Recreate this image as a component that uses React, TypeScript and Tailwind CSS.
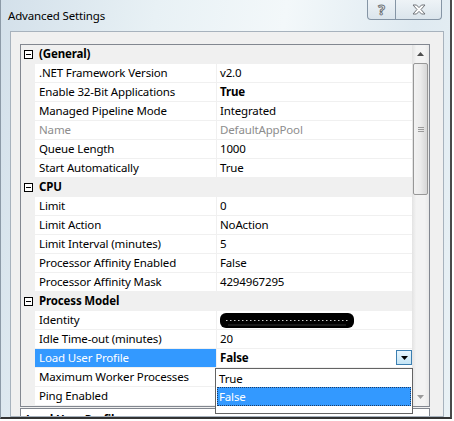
import { Fragment } from "react";

type Prop = { name: string; value?: string; bold?: boolean; muted?: boolean; kind?: "identity" | "selected" };
type Section = { title: string; props: Prop[] };

const sections: Section[] = [
  {
    title: "(General)",
    props: [
      { name: ".NET Framework Version", value: "v2.0" },
      { name: "Enable 32-Bit Applications", value: "True", bold: true },
      { name: "Managed Pipeline Mode", value: "Integrated" },
      { name: "Name", value: "DefaultAppPool", muted: true },
      { name: "Queue Length", value: "1000" },
      { name: "Start Automatically", value: "True" },
    ],
  },
  {
    title: "CPU",
    props: [
      { name: "Limit", value: "0" },
      { name: "Limit Action", value: "NoAction" },
      { name: "Limit Interval (minutes)", value: "5" },
      { name: "Processor Affinity Enabled", value: "False" },
      { name: "Processor Affinity Mask", value: "4294967295" },
    ],
  },
  {
    title: "Process Model",
    props: [
      { name: "Identity", kind: "identity" },
      { name: "Idle Time-out (minutes)", value: "20" },
      { name: "Load User Profile", value: "False", bold: true, kind: "selected" },
      { name: "Maximum Worker Processes" },
      { name: "Ping Enabled" },
    ],
  },
];

const Expander = () => (
  <div className="w-[9px] h-[9px] border border-black bg-white flex items-center justify-center">
    <div className="w-[5px] h-px bg-black" />
  </div>
);

const Redacted = () => (
  <svg width="134" height="15" viewBox="0 0 134 15">
    <rect x="0" y="0" width="134" height="15" rx="6" fill="#000" />
    <path d="M6 7.5 H128" stroke="#fff" strokeWidth="1.2" strokeDasharray="1.5 2.5" opacity="0.8" />
    <path d="M8 12 H126" stroke="#333" strokeWidth="1" />
  </svg>
);

const Row = ({ p }: { p: Prop }) => {
  const selected = p.kind === "selected";
  return (
    <div className="h-[19px] flex border-b border-[#f0f0f0]">
      <div className="w-[14px] bg-[#f0f0f0]" />
      <div
        className={`w-[181px] pl-[4px] flex items-center ${
          selected ? "bg-[#3399ff] text-white" : p.muted ? "text-[#8d8d8d]" : "text-black"
        }`}
      >
        {p.name}
      </div>
      <div className="flex-1 border-l border-[#f0f0f0] pl-[3px] flex items-center relative">
        {p.kind === "identity" ? (
          <Redacted />
        ) : (
          <span className={`${p.bold ? "font-bold" : ""} ${p.muted ? "text-[#8d8d8d]" : "text-black"}`}>
            {p.value}
          </span>
        )}
        {selected && (
          <div className="absolute right-0 top-[1px] w-[16px] h-[15px] border border-[#3c7fb1] bg-[linear-gradient(#eaf6fd,#c4e5f6)] flex items-center justify-center">
            <svg width="7" height="4" viewBox="0 0 7 4">
              <path d="M0 0 H7 L3.5 4 Z" fill="#000" />
            </svg>
          </div>
        )}
      </div>
    </div>
  );
};

const ScrollBar = () => (
  <div className="w-[17px] flex flex-col items-center bg-[linear-gradient(to_right,#e3e3e3,#f3f3f3_25%,#f3f3f3_75%,#e8e8e8)]">
    <div className="h-[18px] flex items-center justify-center">
      <svg width="7" height="4" viewBox="0 0 7 4">
        <path d="M0 4 H7 L3.5 0 Z" fill="#4d4d4d" />
      </svg>
    </div>
    <div className="w-[15px] h-[132px] rounded-[2px] border border-[#979797] bg-[linear-gradient(to_right,#f2f2f2,#ebebeb_50%,#d6d6d6)] flex items-center justify-center">
      <div className="flex flex-col gap-[1px]">
        <div className="w-[6px] h-px bg-[#9a9a9a]" />
        <div className="w-[6px] h-px bg-[#9a9a9a]" />
        <div className="w-[6px] h-px bg-[#9a9a9a]" />
      </div>
    </div>
    <div className="flex-1" />
    <div className="h-[18px] flex items-center justify-center">
      <svg width="7" height="4" viewBox="0 0 7 4">
        <path d="M0 0 H7 L3.5 4 Z" fill="#9a9a9a" />
      </svg>
    </div>
  </div>
);

export default function App() {
  return (
    <div className="w-[454px] h-[421px] bg-white overflow-hidden font-['Noto_Sans','Open_Sans',sans-serif] text-[11.5px] tracking-[-0.15px] leading-none">
      <div className="w-[452px] h-[419px] flex flex-col border-l border-[#8c9aa7] border-r-2 border-r-[#4a4a4a] border-b-2 border-b-[#333] bg-[linear-gradient(100deg,#d3e0ea,#e8f1f5_30%,#f3f8fa_55%,#dfeaf1_80%,#e9f1f5)]">
        {/* title bar */}
        <div className="h-[31px] flex items-start justify-between pl-[7px]">
          <span className="mt-[10px] text-black">Advanced Settings</span>
          <div className="mr-[8px] flex h-[20px] border border-t-0 border-[#8595a5] rounded-b-[4px] bg-[linear-gradient(#eef3f7,#dbe5ec)] overflow-hidden">
            <div className="w-[28px] border-r border-[#8595a5] flex items-center justify-center text-[14px] font-bold text-white [-webkit-text-stroke:1px_#6f7378]">
              ?
            </div>
            <div className="w-[45px] flex items-center justify-center">
              <svg width="14" height="11" viewBox="0 0 14 11">
                <path
                  d="M1 1 H4.5 L7 3.6 L9.5 1 H13 L9 5.5 L13 10 H9.5 L7 7.4 L4.5 10 H1 L5 5.5 Z"
                  fill="#fff"
                  stroke="#6f7378"
                  strokeWidth="1"
                  strokeLinejoin="round"
                />
              </svg>
            </div>
          </div>
        </div>

        {/* client area */}
        <div className="flex-1 ml-[9px] mr-[6px] border border-[#a7b2bd] bg-[#f0f0f0] pt-[12px] pl-[9px] pr-[13px] flex flex-col overflow-hidden">
          <div className="h-[363px] shrink-0 border border-[#828790] bg-white flex relative">
            <div className="w-[391px] flex flex-col">
              {sections.map((s) => (
                <Fragment key={s.title}>
                  <div className="h-[19px] flex items-center bg-[#f0f0f0] border-b border-[#f0f0f0]">
                    <div className="w-[14px] flex justify-center">
                      <Expander />
                    </div>
                    <span className="pl-[4px] font-bold text-black">{s.title}</span>
                  </div>
                  {s.props.map((p) => (
                    <Row key={p.name} p={p} />
                  ))}
                </Fragment>
              ))}
            </div>
            <ScrollBar />

            {/* open dropdown list */}
            <div className="absolute left-[194px] top-[323px] w-[198px] h-[46px] border border-[#646464] bg-white p-[1px] flex flex-col z-10">
              <div className="h-[17px] pl-[2px] flex items-center text-black">True</div>
              <div className="h-[19px] pl-[1px] flex items-center bg-[#3399ff] text-white border border-dotted border-[#1d3d66]">
                False
              </div>
            </div>
          </div>

          <div className="mt-[1px] flex-1 border border-[#828790] bg-white pl-[5px] pt-[5px]">
            <span className="font-bold text-black">Load User Profile</span>
          </div>
        </div>
      </div>
    </div>
  );
}
